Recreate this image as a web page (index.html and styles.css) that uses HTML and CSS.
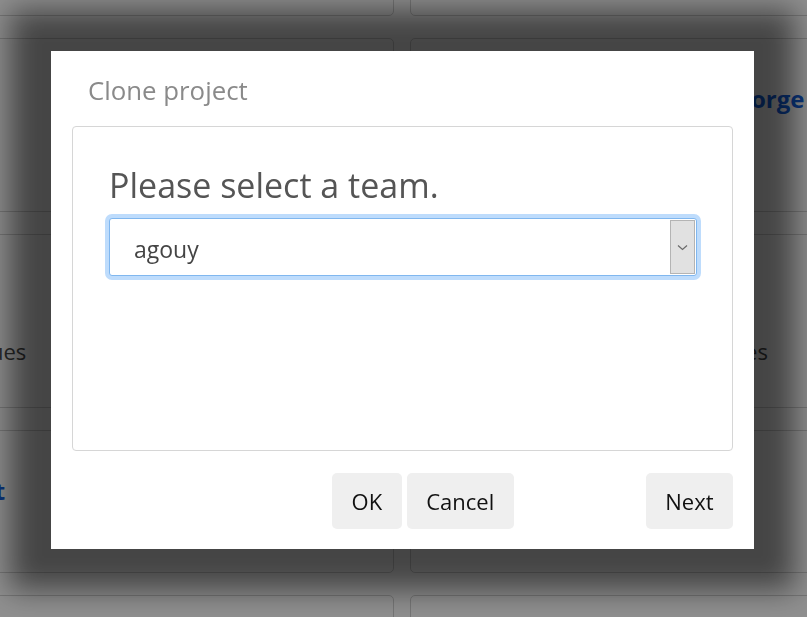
FILE: index.html
```html
<!DOCTYPE html>
<html lang="en">
<head>
<meta charset="utf-8">
<title>Clone project</title>
<link rel="stylesheet" href="styles.css">
</head>
<body>
<main class="page">
  <div class="cards">
    <article class="card"><h2 class="card-title">Notes</h2><p class="card-meta">3 issues</p></article>
    <article class="card"><h2 class="card-title">Sandbox</h2><p class="card-meta">7 issues</p></article>
    <article class="card"><h2 class="card-title">Demo</h2></article>
    <article class="card"><h2 class="card-title">Team website, built with Forge</h2></article>
    <article class="card"><h2 class="card-title">Wiki</h2><p class="card-meta">128 issues</p></article>
    <article class="card"><h2 class="card-title">Tools</h2><p class="card-meta">Updated 12 days ago – 14 issues</p></article>
    <article class="card card-short"><h2 class="card-title">Project</h2></article>
    <article class="card card-short"><h2 class="card-title">API</h2></article>
    <article class="card"><h2 class="card-title">Docs</h2></article>
    <article class="card"><h2 class="card-title">Mobile</h2></article>
  </div>
</main>
<div class="overlay">
  <div class="modal" role="dialog" aria-labelledby="dlg-title">
    <h1 class="modal-title" id="dlg-title">Clone project</h1>
    <div class="modal-body">
      <label class="prompt" for="team">Please select a team.</label>
      <div class="select-wrap">
        <select id="team" class="select"><option>agouy</option></select>
        <span class="select-arrow"><svg width="11" height="7" viewBox="0 0 11 7"><path d="M1 1.5 L5.5 5.5 L10 1.5" fill="none" stroke="#6a6a6a" stroke-width="1.2"/></svg></span>
      </div>
    </div>
    <div class="modal-footer">
      <button class="btn" type="button">OK</button>
      <button class="btn" type="button">Cancel</button>
      <button class="btn btn-next" type="button">Next</button>
    </div>
  </div>
</div>
</body>
</html>
```
FILE: styles.css
```css
html, body {
  margin: 0;
  height: 100%;
  overflow: hidden;
  background: #fff;
  font-family: "Open Sans", "Noto Sans", sans-serif;
}

.page {
  height: 100%;
  overflow: hidden;
}

.cards {
  display: grid;
  grid-template-columns: 500px 500px;
  column-gap: 16px;
  row-gap: 22px;
  width: 1016px;
  margin-left: calc(50% - 509.5px);
  margin-top: -158px;
}

.card {
  height: 174px;
  box-sizing: border-box;
  border: 1px solid #d2d2d2;
  border-radius: 5px;
  background: #fff;
  padding: 44px 25px 0;
}

.card-short {
  height: 143px;
}

.card-title {
  margin: 0;
  font-size: 24px;
  line-height: 32px;
  font-weight: 700;
  color: #1160e0;
  white-space: nowrap;
}

.card-meta {
  margin: 25px 0 0;
  font-size: 22px;
  line-height: 30px;
  color: #4a4a4a;
  white-space: nowrap;
}

.overlay {
  position: fixed;
  inset: 0;
  background: rgba(0, 0, 0, 0.44);
}

.modal {
  margin: 51px 0 0 51px;
  width: 703px;
  height: 498px;
  box-sizing: border-box;
  background: #fff;
  padding: 22px 21px 20px;
  box-shadow: 0 0 28px 41px rgba(0, 0, 0, 0.52);
  display: flex;
  flex-direction: column;
}

.modal-title {
  margin: 0 0 19px 16px;
  font-size: 25.8px;
  line-height: 34px;
  font-weight: 400;
  color: #8a8a8a;
}

.modal-body {
  height: 325px;
  box-sizing: border-box;
  border: 1px solid #d6d6d6;
  border-radius: 4px;
  padding: 36px 35px 0 36px;
}

.prompt {
  display: block;
  margin: 0 0 10px 0;
  font-size: 34px;
  line-height: 45px;
  color: #555;
}

.select-wrap {
  display: flex;
  height: 58px;
  box-sizing: border-box;
  border: 1px solid #80b7ef;
  border-radius: 3px;
  box-shadow: 0 0 0 4px #bedcfc;
  background: #fff;
  padding: 1px;
}

.select {
  flex: 1;
  -webkit-appearance: none;
  appearance: none;
  border: 0;
  outline: none;
  background: transparent;
  font-family: "Open Sans", "Noto Sans", sans-serif;
  font-size: 23px;
  color: #444;
  padding: 3px 0 0 23px;
  margin: 0;
}

.select-arrow {
  width: 25px;
  box-sizing: border-box;
  border: 1px solid #b4b4b4;
  background: #e1e1e1;
  display: flex;
  align-items: center;
  justify-content: center;
}

.modal-footer {
  margin-top: 22px;
  display: flex;
  justify-content: flex-end;
  gap: 5px;
}

.btn {
  height: 56px;
  padding: 0 19.5px;
  border: 0;
  border-radius: 5px;
  background: #efefef;
  font-family: "Open Sans", "Noto Sans", sans-serif;
  font-size: 22px;
  color: #111;
}

.btn-next {
  margin-left: 127px;
}
```
